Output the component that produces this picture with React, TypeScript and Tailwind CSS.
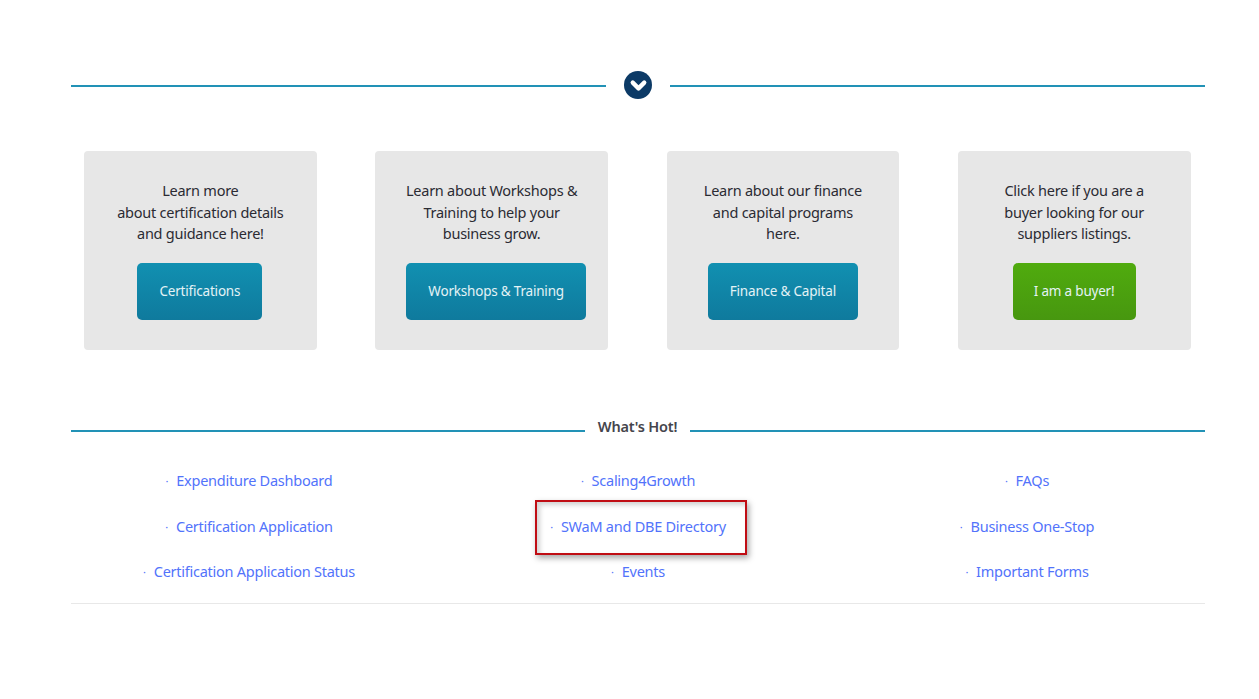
import { ChevronDown } from 'lucide-react';

const cards = [
  { lines: ['Learn more', 'about certification details', 'and guidance here!'], label: 'Certifications', width: 'w-[125px] mr-[1px]', green: false },
  { lines: ['Learn about Workshops &', 'Training to help your', 'business grow.'], label: 'Workshops & Training', width: 'w-[180px] ml-[9px]', green: false },
  { lines: ['Learn about our finance', 'and capital programs', 'here.'], label: 'Finance & Capital', width: 'w-[150px]', green: false },
  { lines: ['Click here if you are a', 'buyer looking for our', 'suppliers listings.'], label: 'I am a buyer!', width: 'w-[123px]', green: true },
];

const links = [
  'Expenditure Dashboard',
  'Scaling4Growth',
  'FAQs',
  'Certification Application',
  'SWaM and DBE Directory',
  'Business One-Stop',
  'Certification Application Status',
  'Events',
  'Important Forms',
];

const App = () => {
  return (
    <div className="min-h-[699px] bg-white pl-[71px] pr-[54px] pt-[72px] font-['Noto_Sans',sans-serif] overflow-hidden">
      {/* Top divider */}
      <div className="flex h-[28px] items-center">
        <div className="h-[2px] w-[535px] bg-[#2292b6]" />
        <div className="flex flex-1 justify-center">
          <div className="-mt-[2px] flex h-[28px] w-[28px] items-center justify-center rounded-full bg-[#0c3a66]">
            <ChevronDown size={23} strokeWidth={4.5} className="mt-[1px] text-white" />
          </div>
        </div>
        <div className="h-[2px] w-[535px] bg-[#2292b6]" />
      </div>

      {/* Cards */}
      <div className="mt-[51px] ml-[13px] grid w-[1106.5px] grid-cols-4 gap-x-[58.5px]">
        {cards.map((card) => (
          <div key={card.label} className="flex h-[199px] flex-col items-center rounded-[4px] bg-[#e7e7e7] pt-[29px]">
            <p className="text-center text-[14.5px] leading-[21.5px] tracking-[-0.25px] text-[#2b2b33]">
              {card.lines.map((line) => (
                <span key={line} className="block">{line}</span>
              ))}
            </p>
            <div
              className={`mt-[18px] flex h-[57px] items-center justify-center rounded-[5px] text-[13.5px] tracking-[-0.2px] text-[#e4f3f6] ${card.width} ${
                card.green ? 'bg-gradient-to-b from-[#50ab0e] to-[#47970f]' : 'bg-gradient-to-b from-[#1190b1] to-[#0f7a9d]'
              }`}
            >
              {card.label}
            </div>
          </div>
        ))}
      </div>

      {/* What's Hot divider */}
      <div className="mt-[63px] flex h-[28px] items-center">
        <div className="mt-[8px] h-[2px] w-[514px] bg-[#2292b6]" />
        <div className="flex-1 text-center text-[14.5px] font-semibold tracking-[-0.2px] text-[#45454d]">What's Hot!</div>
        <div className="mt-[8px] h-[2px] w-[515px] bg-[#2292b6]" />
      </div>

      {/* Links */}
      <div className="mt-[17.5px] grid grid-cols-3 gap-x-[33px] border-b border-[#e8e8e8] pb-[7.5px]">
        {links.map((link) => (
          <div key={link} className="relative flex h-[45.5px] items-center justify-center text-[14.5px] tracking-[-0.25px] text-[#5273fb]">
            <span className="mr-[8px] text-[11px]">·</span>
            <span>{link}</span>
            {link === 'SWaM and DBE Directory' && (
              <div className="absolute left-[74.5px] top-[-4px] h-[55px] w-[212px] border-2 border-[#c00d14] shadow-[2px_3px_6px_rgba(0,0,0,0.35),inset_3px_3px_5px_rgba(0,0,0,0.18)]" />
            )}
          </div>
        ))}
      </div>
    </div>
  );
};

export default App;
